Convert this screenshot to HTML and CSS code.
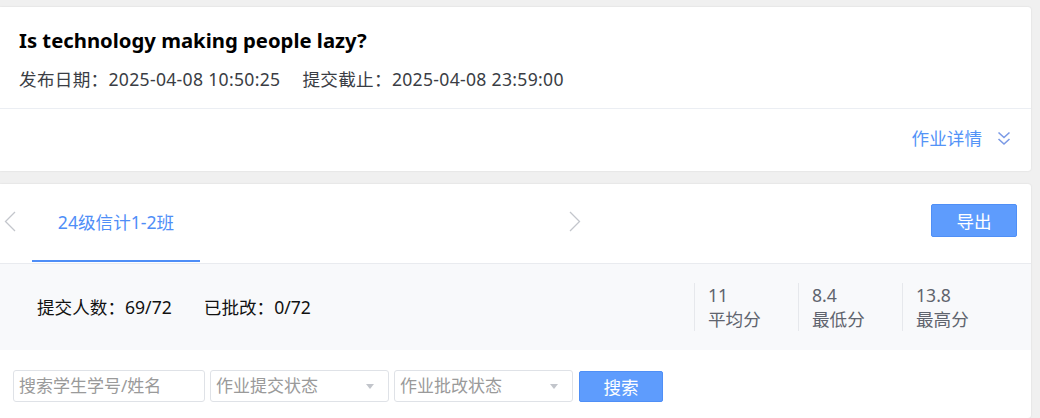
FILE: index.html
```html
<!DOCTYPE html>
<html lang="zh-CN">
<head>
<meta charset="utf-8">
<title>作业详情</title>
<link rel="stylesheet" href="styles.css">
</head>
<body>
<div class="page">
  <section class="card hw-card">
    <div class="hw-head">
      <h1 class="hw-title">Is technology making people lazy?</h1>
      <div class="hw-meta">
        <span>发布日期：2025-04-08 10:50:25</span>
        <span>提交截止：2025-04-08 23:59:00</span>
      </div>
    </div>
    <div class="hw-foot">
      <a class="detail-link">作业详情</a>
      <svg class="dbl-chevron" width="14" height="15" viewBox="0 0 14 15">
        <path d="M1.5 1.5 L7 6.5 L12.5 1.5" fill="none" stroke="#7b9ae6" stroke-width="1.6"/>
        <path d="M1.5 8 L7 13 L12.5 8" fill="none" stroke="#7b9ae6" stroke-width="1.6"/>
      </svg>
    </div>
  </section>

  <section class="card class-card">
    <div class="tab-row">
      <div class="tab-nav">
        <span class="nav-arrow prev">
          <svg width="12" height="21" viewBox="0 0 12 21"><path d="M11 1 L1.5 10.5 L11 20" fill="none" stroke="#c3c6cc" stroke-width="1.3"/></svg>
        </span>
        <div class="tab active">24级信计1-2班</div>
        <span class="nav-arrow next">
          <svg width="12" height="21" viewBox="0 0 12 21"><path d="M1 1 L10.5 10.5 L1 20" fill="none" stroke="#c3c6cc" stroke-width="1.3"/></svg>
        </span>
      </div>
      <button class="btn btn-primary export-btn">导出</button>
    </div>

    <div class="stats">
      <div class="stats-left">
        <span>提交人数：69/72</span>
        <span>已批改：0/72</span>
      </div>
      <div class="stats-right">
        <div class="stat"><div>11</div><div>平均分</div></div>
        <div class="stat"><div>8.4</div><div>最低分</div></div>
        <div class="stat"><div>13.8</div><div>最高分</div></div>
      </div>
    </div>

    <div class="search-row">
      <div class="field input-field"><span class="placeholder">搜索学生学号/姓名</span></div>
      <div class="field select-field"><span class="placeholder">作业提交状态</span><i class="caret"></i></div>
      <div class="field select-field"><span class="placeholder">作业批改状态</span><i class="caret"></i></div>
      <button class="btn btn-primary search-btn">搜索</button>
    </div>
  </section>
</div>
</body>
</html>
```

FILE: styles.css
```css
* { box-sizing: border-box; }
html, body { margin: 0; padding: 0; }
body {
  background: #f0f0f0;
  font-family: "Noto Sans", "Noto Sans CJK SC", sans-serif;
  font-size: 17.6px;
  color: #333;
  width: 1040px;
  height: 418px;
  overflow: hidden;
}
.page {
  padding: 7px 9px 0 0;
}
.card {
  background: #fff;
  border-radius: 0 3px 3px 0;
  box-shadow: 0 0 2px rgba(0,0,0,0.12);
}
.hw-head {
  height: 102px;
  padding: 19px 19px 0;
  border-bottom: 1px solid #ebeef3;
}
.hw-title {
  margin: 0;
  font-size: 20.3px;
  font-weight: 700;
  line-height: 28px;
  color: #000;
}
.hw-meta {
  margin-top: 12px;
  line-height: 26px;
  color: #3a3d44;
  display: flex;
  gap: 22px;
  letter-spacing: 0.3px;
}
.hw-foot {
  height: 62px;
  display: flex;
  align-items: center;
  justify-content: flex-end;
  padding: 0 20px 4px 0;
}
.detail-link {
  color: #5393f7;
  line-height: 26px;
}
.dbl-chevron { margin-left: 15px; margin-top: 1px; }

.class-card {
  margin-top: 13px;
  height: 234px;
}
.tab-row {
  height: 80px;
  display: flex;
  border-bottom: 1px solid #e9ebef;
}
.tab-nav {
  width: 590px;
  display: flex;
  align-items: flex-start;
}
.nav-arrow { display: flex; margin-top: 27px; }
.nav-arrow.prev { width: 32px; padding-left: 4px; }
.nav-arrow.next { margin-left: auto; margin-right: 9px; }
.tab {
  width: 168px;
  height: 78px;
  text-align: center;
  padding-top: 25px;
  line-height: 26px;
  color: #4f8ef7;
  border-bottom: 2px solid #4f8ef7;
}
.btn {
  font-family: inherit;
  font-size: 17.6px;
  color: #fff;
  border-radius: 2px;
  cursor: pointer;
}
.btn-primary {
  background: #5e9cfd;
  border: 1px solid #4f8ff6;
}
.export-btn {
  margin-left: auto;
  margin-right: 14px;
  margin-top: 20px;
  width: 86px;
  height: 33px;
  padding: 0;
}

.stats {
  height: 86px;
  background: #f8f9fb;
  display: flex;
  align-items: center;
  justify-content: space-between;
  padding: 0 25px 0 37px;
  color: #111;
}
.stats-left { display: flex; gap: 32px; line-height: 26px; }
.stats-right { display: flex; }
.stat {
  width: 104px;
  border-left: 1px solid #e6e8ec;
  padding-left: 13px;
  line-height: 24px;
  color: #5f646e;
}

.search-row {
  display: flex;
  align-items: center;
  padding: 20px 0 0 13px;
}
.field {
  height: 32px;
  border: 1px solid #dfe2e7;
  border-radius: 3px;
  display: flex;
  align-items: center;
  padding-left: 5px;
  background: #fff;
  overflow: hidden;
}
.placeholder { color: #9a9a9a; line-height: 24px; white-space: nowrap; font-size: 17px; }
.input-field { width: 192px; }
.select-field {
  width: 179px;
  margin-left: 5px;
  padding-right: 14px;
  justify-content: space-between;
}
.caret {
  width: 0; height: 0;
  border-left: 4px solid transparent;
  border-right: 4px solid transparent;
  border-top: 5px solid #c2c5cb;
}
.search-btn {
  margin-left: 6px;
  width: 84px;
  height: 31px;
  padding: 0;
}
```
